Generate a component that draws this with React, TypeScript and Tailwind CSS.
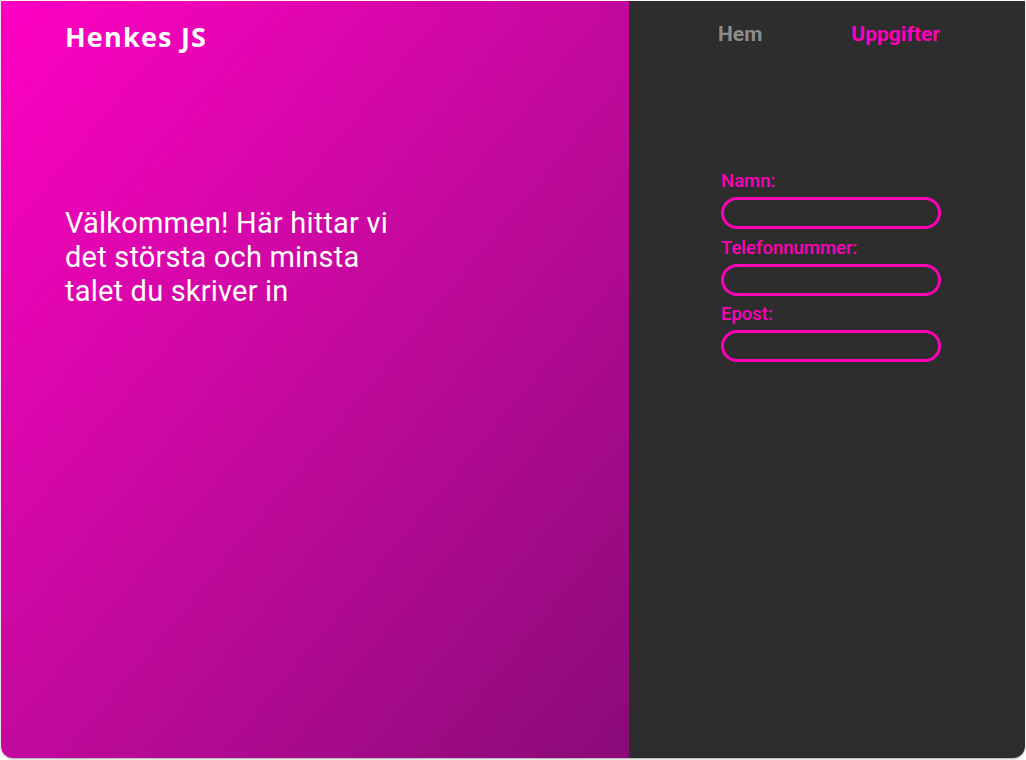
import React from 'react';

const App = () => {
  const fields = ['Namn:', 'Telefonnummer:', 'Epost:'];

  return (
    <div className="w-[1026px] h-[760px] bg-white p-px pb-[2px]">
      <div className="flex h-full rounded-b-[12px] overflow-hidden shadow-[0_1px_2px_rgba(0,0,0,0.35)] font-['Roboto',sans-serif]">
        {/* left hero */}
        <div className="w-[628px] h-full bg-gradient-to-br from-[#ff00c3] to-[#8a0a78] pl-[64px] pt-[18px]">
          <h1 className="text-[27px] leading-[36px] font-bold tracking-[1.2px] text-white font-['Open_Sans',sans-serif]">Henkes JS</h1>
          <p className="mt-[151px] w-[340px] text-[29px] leading-[34px] tracking-[0.2px] text-white">
            Välkommen! Här hittar vi det största och minsta talet du skriver in
          </p>
        </div>

        {/* right side */}
        <div className="flex-1 h-full bg-[#2d2d2d]">
          <nav className="flex pt-[19px] pl-[89px] gap-[89px] text-[21px] leading-[28px] font-bold">
            <span className="text-[#8c8c8c]">Hem</span>
            <span className="text-[#ff00b9]">Uppgifter</span>
          </nav>
          <form className="mt-[123px] ml-[92px] w-[220px] flex flex-col">
            {fields.map((f) => (
              <div key={f} className="flex flex-col mb-[8.5px]">
                <label className="text-[18.5px] leading-[20px] mb-[6px] font-medium text-[#ff00b9]">{f}</label>
                <input className="h-[32px] rounded-full border-[3px] border-[#ff00b9] bg-transparent outline-none" />
              </div>
            ))}
          </form>
        </div>
      </div>
    </div>
  );
};

export default App;
